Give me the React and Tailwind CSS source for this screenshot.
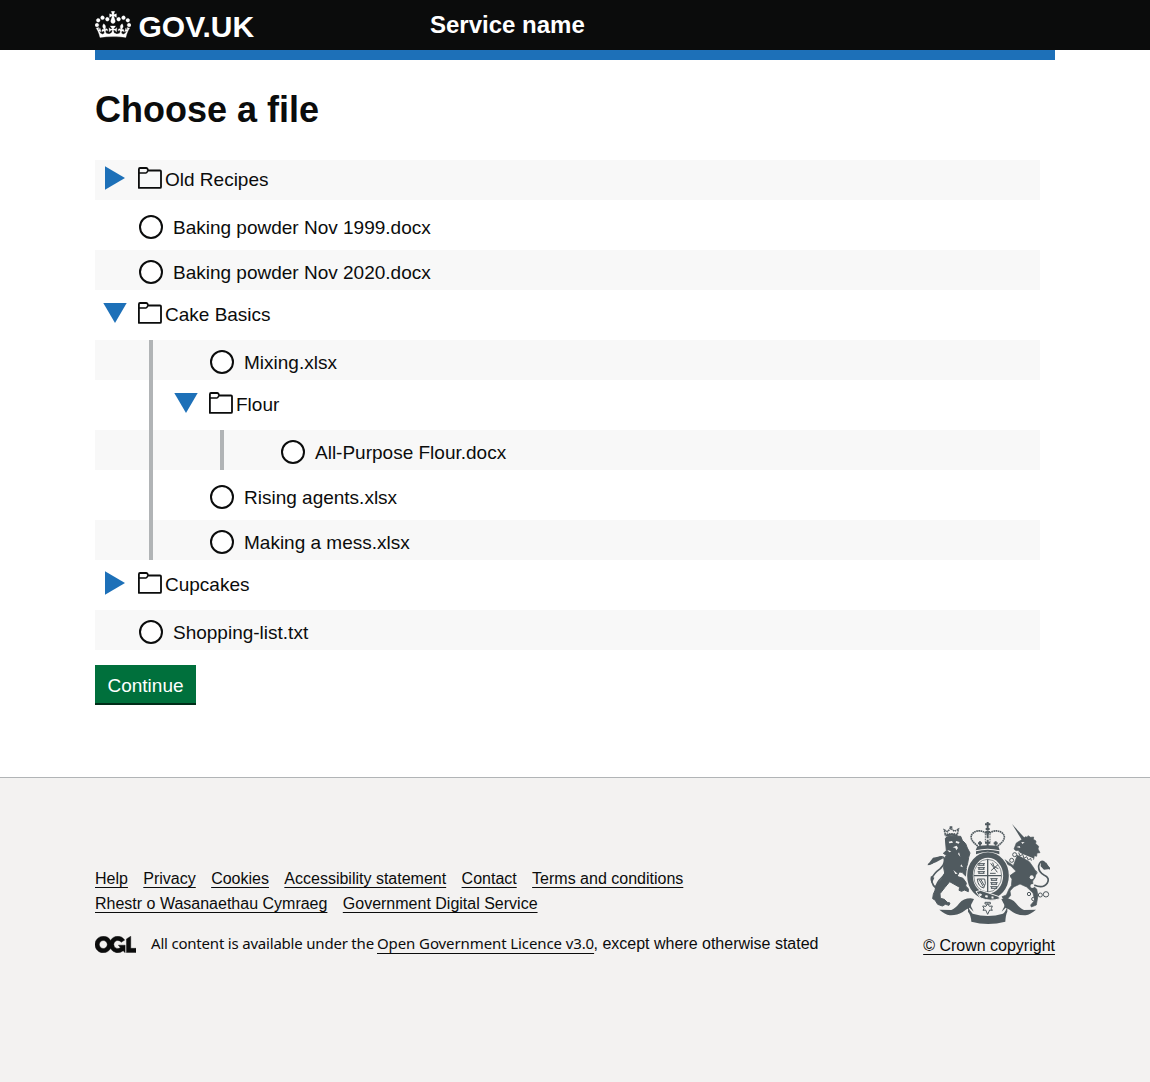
import React from "react";

const tree = [
  { name: "Old Recipes", folder: true, shaded: true },
  { name: "Baking powder Nov 1999.docx" },
  { name: "Baking powder Nov 2020.docx", shaded: true },
  {
    name: "Cake Basics",
    folder: true,
    open: true,
    children: [
      { name: "Mixing.xlsx", shaded: true },
      {
        name: "Flour",
        folder: true,
        open: true,
        children: [{ name: "All-Purpose Flour.docx", shaded: true }],
      },
      { name: "Rising agents.xlsx" },
      { name: "Making a mess.xlsx", shaded: true },
    ],
  },
  { name: "Cupcakes", folder: true },
  { name: "Shopping-list.txt", shaded: true },
];

const indents = ["pl-0", "pl-[71px]", "pl-[142px]"];
const guides = ["left-[53.5px]", "left-[124.5px]"];

function Crown() {
  return (
    <svg viewBox="0 0 132 97" className="mt-[11px] h-[27px] w-9 shrink-0" fill="currentColor" stroke="currentColor" strokeWidth="1">
      <path
        fillRule="evenodd"
        d="M25 30.2c3.5 1.5 7.7-.2 9.1-3.7 1.5-3.6-.2-7.8-3.9-9.2-3.6-1.4-7.6.3-9.1 3.9-1.4 3.5.3 7.5 3.9 9zM9 39.5c3.6 1.5 7.8-.2 9.2-3.7 1.5-3.6-.2-7.8-3.9-9.1-3.6-1.5-7.6.2-9.1 3.8-1.4 3.5.3 7.5 3.8 9zM4.4 57.2c3.5 1.5 7.7-.2 9.1-3.8 1.5-3.6-.2-7.7-3.9-9.1-3.5-1.5-7.6.3-9.1 3.8-1.4 3.5.3 7.6 3.9 9.1zm38.3-21.4c3.5 1.5 7.7-.2 9.1-3.8 1.5-3.6-.2-7.7-3.9-9.1-3.6-1.5-7.6.3-9.1 3.8-1.3 3.6.4 7.7 3.9 9.1zm64.4-5.6c-3.6 1.5-7.8-.2-9.1-3.7-1.5-3.6.2-7.8 3.8-9.2 3.6-1.4 7.7.3 9.2 3.9 1.3 3.5-.4 7.5-3.9 9zm15.9 9.3c-3.6 1.5-7.7-.2-9.1-3.7-1.5-3.6.2-7.8 3.7-9.1 3.6-1.5 7.7.2 9.2 3.8 1.5 3.5-.3 7.5-3.8 9zm4.7 17.7c-3.6 1.5-7.8-.2-9.2-3.8-1.5-3.6.2-7.7 3.9-9.1 3.6-1.5 7.7.3 9.2 3.8 1.3 3.5-.4 7.6-3.9 9.1zM89.3 35.8c-3.6 1.5-7.8-.2-9.2-3.8-1.4-3.6.2-7.7 3.9-9.1 3.6-1.5 7.7.3 9.2 3.8 1.4 3.6-.3 7.7-3.9 9.1zM69.7 17.7l8.9 4.7V9.3l-8.9 2.8c-.2-.3-.5-.6-.9-.9L72.4 0H59.6l3.5 11.2c-.3.3-.6.5-.9.9l-8.8-2.8v13.1l8.8-4.7c.3.3.6.7.9.9l-5 15.4v.1c-.2.8-.4 1.6-.4 2.4 0 4.1 3.1 7.5 7 8.1h.2c.3 0 .7.1 1 .1.4 0 .7 0 1-.1h.2c4-.6 7.1-4.1 7.1-8.1 0-.8-.1-1.7-.4-2.4V34l-5.1-15.4c.4-.2.7-.6 1-.9zM66 92.8c16.9 0 32.8 1.1 47.1 3.2 4-16.9 8.9-26.7 14-33.5l-9.6-3.4c1 4.9 1.1 7.2 0 10.2-1.5-1.4-3-4.3-4.2-8.7L108.6 76c2.8-2 5-3.2 7.5-3.3-4.4 9.4-10 11.9-13.6 11.2-4.3-.8-6.3-4.6-5.6-7.9 1-4.7 5.7-5.9 8-.5 4.3-8.7-3-11.4-7.6-8.8 7.1-7.2 7.9-13.5 2.1-21.1-8 6.1-8.1 12.3-4.5 20.8-4.7-5.4-12.1-2.5-9.5 6.2 3.4-5.2 7.9-2 7.2 3.1-.6 4.3-6.4 7.8-13.5 7.2-10.3-.9-10.9-8-11.2-13.8 2.5-.5 7.1 1.8 11 7.3L80.2 60c-4.1 4.4-8 5.3-12.3 5.4 1.4-4.4 8-11.6 8-11.6H55.5s6.4 7.2 7.9 11.6c-4.2-.1-8-1-12.3-5.4l1.4 16.4c3.9-5.5 8.5-7.7 10.9-7.3-.3 5.8-.9 12.8-11.1 13.8-7.2.6-12.9-2.9-13.5-7.2-.7-5 3.8-8.3 7.1-3.1 2.7-8.7-4.6-11.6-9.4-6.2 3.7-8.5 3.6-14.7-4.6-20.8-5.8 7.6-5 13.9 2.2 21.1-4.7-2.6-11.9.1-7.7 8.8 2.3-5.5 7.1-4.2 8.1.5.7 3.3-1.3 7.1-5.7 7.9-3.5.7-9-1.8-13.5-11.2 2.5.1 4.7 1.3 7.5 3.3l-4.7-15.4c-1.2 4.4-2.7 7.2-4.3 8.7-1.1-3-.9-5.3 0-10.2l-9.5 3.4c5 6.9 9.9 16.7 14 33.5 14.8-2.1 30.8-3.2 47.7-3.2z"
      />
    </svg>
  );
}

function OglLogo() {
  return (
    <svg viewBox="0 0 483.2 195.7" className="mt-[5px] mr-[15px] h-[17px] w-[41px] shrink-0" fill="currentColor" stroke="currentColor" strokeWidth="5">
      <path d="M421.5 142.8V.1l-50.7 32.3v161.1h112.4v-50.7zm-122.3-9.6A47.12 47.12 0 0 1 221 97.8c0-26 21.1-47.1 47.1-47.1 16.7 0 31.4 8.7 39.7 21.8l42.7-27.2A97.63 97.63 0 0 0 268.1 0c-36.5 0-68.3 20.1-85.1 49.7A98 98 0 0 0 97.8 0C43.9 0 0 43.9 0 97.8s43.9 97.8 97.8 97.8c36.5 0 68.3-20.1 85.1-49.7a97.76 97.76 0 0 0 149.6 25.4l19.4 22.2h3v-87.8h-80l24.3 27.5zM97.8 145c-26 0-47.1-21.1-47.1-47.1s21.1-47.1 47.1-47.1 47.1 21.1 47.1 47.1S123.8 145 97.8 145" />
    </svg>
  );
}

function Toggle({ open }) {
  return (
    <svg viewBox="0 0 24 24" className="mt-[6px] h-6 w-6 shrink-0" fill="#1d70b8">
      {open ? <path d="M.3 2h23.4L12 22z" /> : <path d="M2 .3v23.4L22 12z" />}
    </svg>
  );
}

function FolderIcon() {
  return (
    <svg
      viewBox="0 0 24 22"
      className="mt-[7px] ml-[11px] h-[22px] w-6 shrink-0"
      fill="none"
      stroke="#0b0c0c"
      strokeWidth="1.8"
      strokeLinejoin="round"
    >
      <path d="M.9 20.9V2.2Q.9 1 2 1h6.3q1 0 1.2.9l.6 1.6H22q1 0 1 1v15.4q0 1-1 1z" />
      <path d="M1 5.900h6.800q1 0 1.300-.8l.6-1.400" strokeWidth="1.500" />
    </svg>
  );
}

function Row({ item, depth }) {
  return (
    <div className={(item.shaded ? "bg-[#f8f8f8] " : "") + "flex h-10 " + indents[depth]}>
      {item.folder ? (
        <>
          <div className="ml-2 flex">
            <Toggle open={item.open} />
            <FolderIcon />
          </div>
          <span className="ml-[3px] pt-[7px]">{item.name}</span>
        </>
      ) : (
        <>
          <span className="mt-[10px] ml-11 h-6 w-6 shrink-0 rounded-full border-2 border-[#0b0c0c] bg-white" />
          <span className="ml-[10px] pt-[10px]">{item.name}</span>
        </>
      )}
    </div>
  );
}

function Tree({ items, depth = 0 }) {
  return (
    <div className="relative flex flex-col gap-[5px]">
      {items.map((item) => (
        <React.Fragment key={item.name}>
          <Row item={item} depth={depth} />
          {item.children && <Tree items={item.children} depth={depth + 1} />}
        </React.Fragment>
      ))}
      {depth > 0 && (
        <span className={"absolute top-0 bottom-0 w-1 bg-[#b1b4b6] " + guides[depth - 1]} />
      )}
    </div>
  );
}

function Lion() {
  return (
    <path d="M0 0h22M2 5h18M5 0l-2 5M17 0l2 5" fill="none" stroke="#505a5f" strokeWidth="3" />
  );
}

function RoyalArms() {
  return (
    <svg viewBox="45 30 375 315" className="h-[105px] w-[125px]" fill="#505a5f">
      {/* ribbon */}
      <path d="M88 299l36 1q12-4 24-20 12-15 34-15l10 2-6 12q-6 8 0 16l5 10-12-12q-10 4-22 14-16 10-38 9-14-3-31-17z" />
      <path d="M378 299l-36 1q-12-4-24-20-12-15-34-15l-10 2 6 12q6 8 0 16l-5 10 12-12q10 4 22 14 16 10 38 9 14-3 31-17z" />
      <path d="M174 287q4 16 14 24 46 14 91 0 10-8 13-24v18q-5 9-6 30-52 14-102 0-1-19-10-30z" />
      {/* tails */}
      <g fill="none" stroke="#505a5f" strokeLinecap="round">
        <path d="M90 242Q63 227 65 207q5-16 26-31 20-20 10-34-8-5-20 4-16 17-25 17" strokeWidth="5" />
        <path d="M78 232q0-13 18-30 24-22 15-50" strokeWidth="4" />
        <path d="M374 226q26 11 38-7 8-16-9-23-19-10-17-29 5-17 15-12 7 12 18 21" strokeWidth="5" />
      </g>
      <path d="M52 166l17-23 23-4 8 6-22 12zM63 198l10 5-7 17q-7-9-3-22zM393 154l16 4 12 19-19 2-10-10z" />
      {/* lion */}
      <path
        stroke="#505a5f"
        strokeWidth="3"
        strokeLinejoin="round"
        d="M106 85l10-7 36 1 5 12 10 10 5 13 8 15-4 13-3 18-5 17 17 18 1 8-17-3-13-13-8-1-7 13 18 6 10 14-2 9 8 8v9l-12-5-8 4-8-3 2-9-30-17-14 17-15 19 1 14 12 3 9 9 8 2-3 7-11-3-9 5-14-5-8-13-7-4 2-13 5-12 3-15 18-21 8-16-3-15 2-27 6-11-9-6 9-8z"
      />
      <g fill="#f3f2f1">
        <path d="M116 95l10-2 3 5-11 2zM138 93l11 3-3 5-9-3zM128 112l12-5 4 7-5 7-3-7zM112 120l12 4-6 3zM147 127l4 13-7-8zM154 163l5 9-8-3zM130 180l13 11-7 1z" />
      </g>
      <path d="M106 74l-3-14 10 5 9-11 11 10 12-6-3 16q-18-5-36 0z" fill="none" stroke="#505a5f" strokeWidth="5" strokeDasharray="5 2" />
      <path d="M119 49h8v5h-8zM107 74q17-5 34 0v6q-17-6-34 0z" />
      {/* unicorn */}
      <path d="M306 42l39 43-9 6z" />
      <path
        stroke="#505a5f"
        strokeWidth="2"
        strokeLinejoin="round"
        d="M319 99l18-11 10-8 5 2 2-5 8 5 9-1-1 7 8 5-1 8 9 8-2 8 6 11-9 1-1 10-7-2-2 11-32-11-15-16-6 1-6-5zM323 133l35 22 12 17 9 15-4 16-7 10 1 15 11 9 4 20-5 28-15 6-2-6 12-14-5-22-19-18-20-9-19 9-11 12 2 13-10 12-12-2-4-6 13-5 8-18 7-10 2-20-9-12-23-4-8 8-10-2 10-15 22 2 13 12 17-12-15-16-17-8-6 7-9-1 5-14 10-2 24 17z"
      />
      <g fill="#f3f2f1">
        <path d="M323 126l47 19-4 12-45-23zM334 96l10 1-7 5zM319 111l10-3 2 6z" />
        <circle cx="365" cy="202" r="6" />
        <circle cx="367" cy="228" r="6" />
      </g>
      <g fill="none" stroke="#505a5f" strokeWidth="3">
        <path d="M326 128l4 10 8-5 4 12 8-5 5 10 7-5 2 7" />
        <circle cx="314" cy="134" r="6" />
        <circle cx="305" cy="151" r="6" />
        <circle cx="376" cy="188" r="5" />
        <circle cx="357" cy="252" r="5" />
        <circle cx="370" cy="267" r="5" />
        <circle cx="391" cy="255" r="6" />
        <circle cx="408" cy="253" r="8" />
      </g>
      {/* garter and shield */}
      <ellipse cx="234" cy="198" rx="66" ry="75" fill="#f3f2f1" />
      <ellipse cx="234" cy="197" rx="54" ry="62" fill="none" stroke="#505a5f" strokeWidth="17" />
      <ellipse cx="233" cy="197" rx="42" ry="49" fill="#f3f2f1" stroke="#505a5f" strokeWidth="2" />
      <path d="M231 148h4v98h-4zM192 195h82v4h-82z" />
      <g transform="translate(203 161)"><Lion /></g>
      <g transform="translate(203 173)"><Lion /></g>
      <g transform="translate(203 185)"><Lion /></g>
      <g transform="translate(241 206)"><Lion /></g>
      <g transform="translate(241 218)"><Lion /></g>
      <g transform="translate(241 230)"><Lion /></g>
      <g fill="none" stroke="#505a5f" strokeWidth="3">
        <path d="M242 160l20 27M264 164l-21 18M248 158l4 12 13 6M240 190h17" />
        <path d="M202 207l22 0q6 13-3 27-17-4-19-27M207 208l13 22M212 207l10 18" />
      </g>
      <path d="M198 245l14-4 53 18 5 7q-30 10-58-2z" stroke="#f3f2f1" strokeWidth="3" />
      <path d="M209 250l7 3-3 6-7-3zM227 255l7 2-2 6-7-2zM245 259l6 1-1 6-6-1z" fill="#f3f2f1" />
      <path d="M225 277h16v5h-16zM233 281l5 8 9-1-3 8 3 5-8-1-6 13-6-13-8 1 3-6-4-7 10 1z" fill="none" stroke="#505a5f" strokeWidth="3" />
      {/* imperial crown */}
      <path d="M197 121l5-12q31-7 63 0l4 12q-36-10-72 0zM198 124q35-10 70 0v9q-35-15-70 0z" />
      <g fill="none" stroke="#505a5f">
        <path d="M203 108q-29-22-15-38 20-16 43 2M263 108q30-22 15-38-20-16-43 2" strokeWidth="5" strokeDasharray="5 1.500" />
        <path d="M233 36v19M225 43h16M227 57h12M233 61v24M226 66h14M233 89v20M225 98h16M210 94v13M204 100h12M257 94v13M251 100h12" strokeWidth="6" />
        <path d="M226 72v24M240 72v24" strokeWidth="3" strokeDasharray="3 2" />
      </g>
    </svg>
  );
}

function FooterLink({ children }) {
  return (
    <a href="#" className="underline decoration-1 underline-offset-[2.5px]">
      {children}
    </a>
  );
}

export default function App() {
  return (
    <div className="flex min-h-[1082px] flex-col bg-white font-['Liberation_Sans',Arial,sans-serif] text-[19px] leading-[25px] text-[#0b0c0c]">
      <header className="h-[50px] bg-[#0b0c0c] text-white">
        <div className="mx-auto flex w-[960px]">
          <div className="flex w-[335px]">
            <Crown />
            <span className="mt-[12px] ml-[7.5px] text-[30px] leading-[30px] font-bold">GOV.UK</span>
          </div>
          <span className="mt-[10px] text-[24px] leading-[30px] font-bold">Service name</span>
        </div>
      </header>
      <div className="mx-auto h-[10px] w-[960px] bg-[#1d70b8]" />

      <main className="mx-auto h-[717px] w-[960px] pt-[30px]">
        <h1 className="mb-[30px] text-[36px] leading-[40px] font-bold">Choose a file</h1>
        <div className="w-[945px]">
          <Tree items={tree} />
        </div>
        <button className="mt-[15px] block h-10 w-[101px] border-b-2 border-[#002d18] bg-[#00703c] pt-[2px] text-center text-white">
          Continue
        </button>
      </main>

      <footer className="grow border-t border-[#b1b4b6] bg-[#f3f2f1] text-[16px]">
        <div className="mx-auto flex w-[960px] justify-between">
          <div className="pt-[88px]">
            <div className="flex gap-[15.4px]">
              <FooterLink>Help</FooterLink>
              <FooterLink>Privacy</FooterLink>
              <FooterLink>Cookies</FooterLink>
              <FooterLink>Accessibility statement</FooterLink>
              <FooterLink>Contact</FooterLink>
              <FooterLink>Terms and conditions</FooterLink>
            </div>
            <div className="flex gap-[15.4px]">
              <FooterLink>Rhestr o Wasanaethau Cymraeg</FooterLink>
              <FooterLink>Government Digital Service</FooterLink>
            </div>
            <div className="mt-[15px] flex">
              <OglLogo />
              <div className="flex">
                <span className="w-[226px] font-['Noto_Sans',sans-serif] text-[15px] tracking-[-0.2px] whitespace-nowrap">
                  All content is available under the
                </span>
                <a
                  href="#"
                  className="w-[217px] font-['Noto_Sans',sans-serif] text-[15px] tracking-[-0.1px] whitespace-nowrap underline decoration-1 underline-offset-[4px]"
                >
                  Open Government Licence v3.0
                </a>
                <span className="-ml-[0.5px]">, except where otherwise stated</span>
              </div>
            </div>
          </div>
          <div className="flex flex-col items-end pt-[42px]">
            <div className="mr-[5px]">
              <RoyalArms />
            </div>
            <div className="mt-[8px]">
              <FooterLink>© Crown copyright</FooterLink>
            </div>
          </div>
        </div>
      </footer>
    </div>
  );
}
